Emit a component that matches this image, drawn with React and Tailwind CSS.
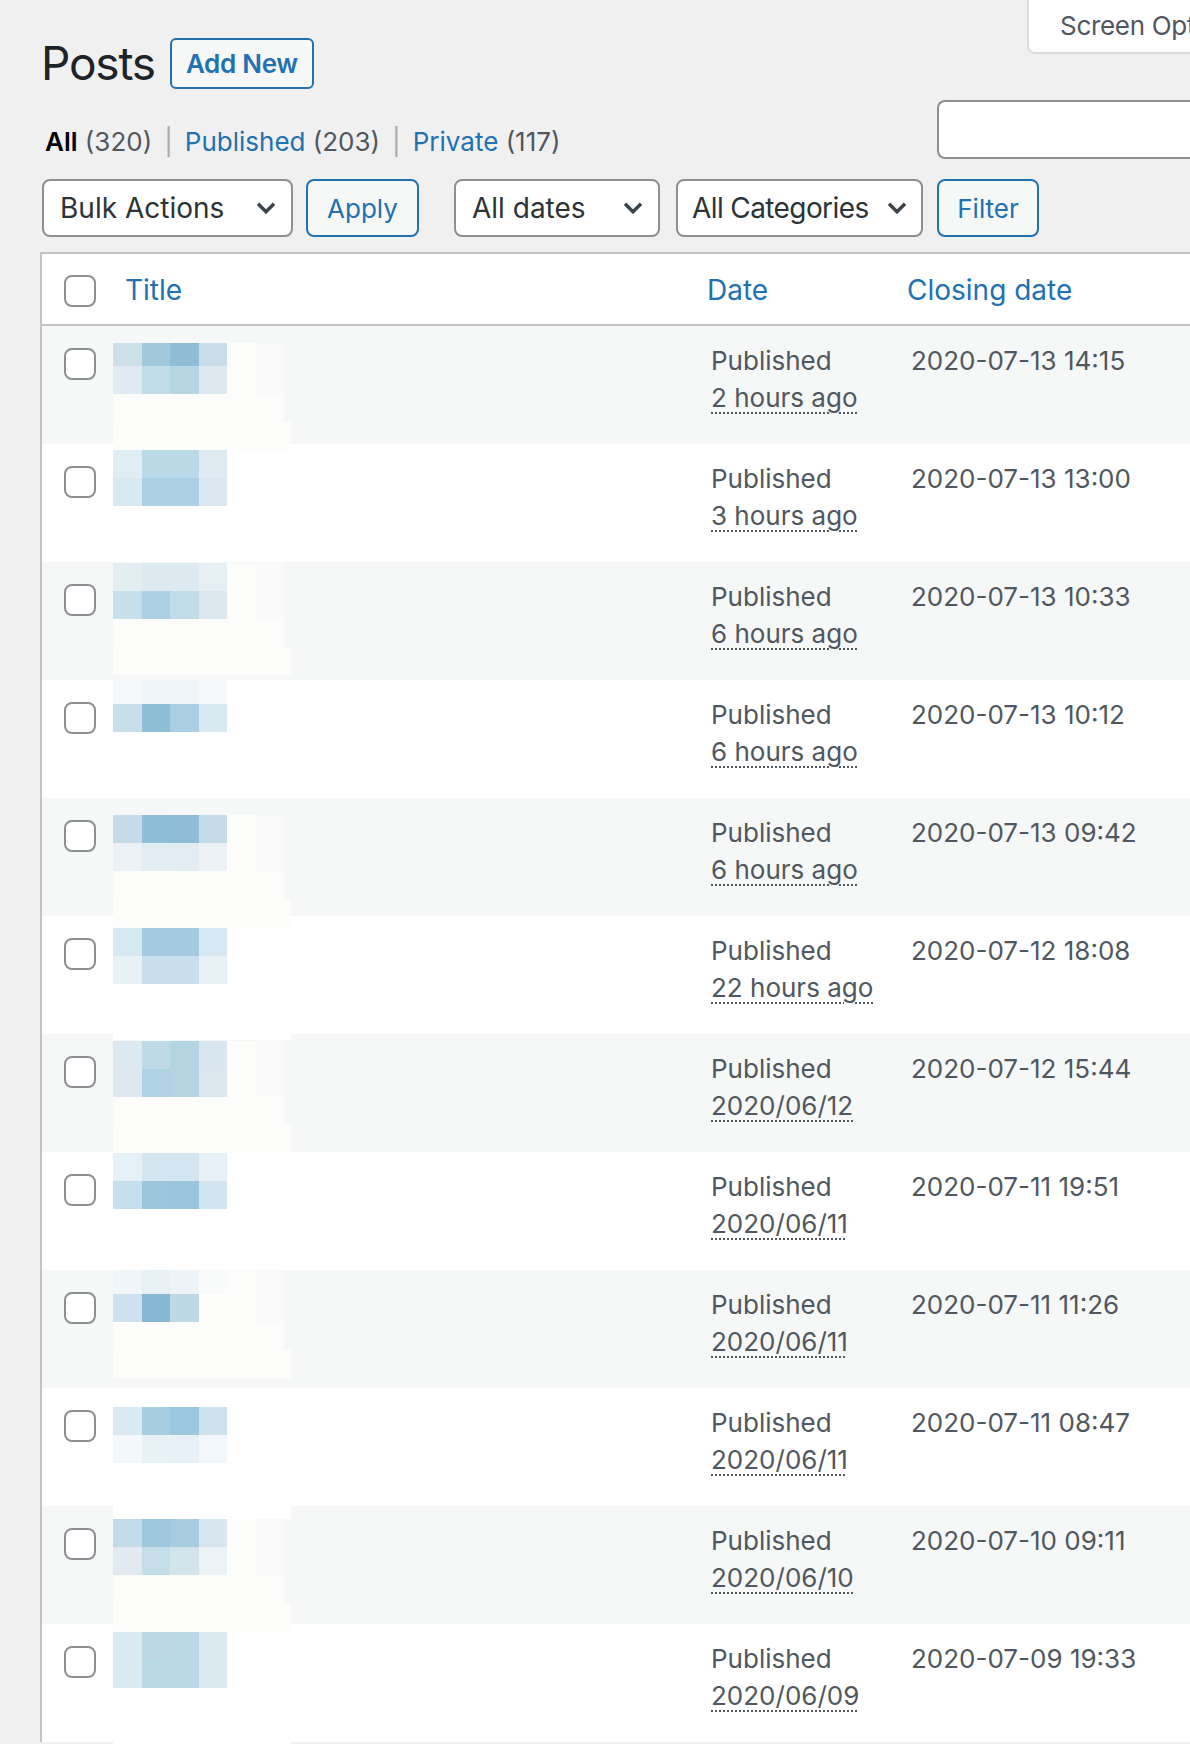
import React from 'react';

const FONT = { fontFamily: 'Inter, "Noto Sans", "Liberation Sans", sans-serif' };

const rows = [
  { ago: '2 hours ago', closing: '2020-07-13 14:15', top: 17, h1: 23, a: ['#cde0ea', '#a2c8dc', '#8fbdd5', '#c8dce8'], b: ['#e1eaf2', '#c1dbe7', '#b6d6e3', '#dde8f0'] },
  { ago: '3 hours ago', closing: '2020-07-13 13:00', top: 6, h1: 28, a: ['#dfedf5', '#badaea', '#badaea', '#dfebf3'], b: ['#d8e9f2', '#acd0e3', '#acd0e3', '#dbe8f1'] },
  { ago: '6 hours ago', closing: '2020-07-13 10:33', top: 1, h1: 28, a: ['#e3eef3', '#deeaf1', '#deeaf1', '#e6eff4'], b: ['#c8dfec', '#acd0e3', '#c1dbe8', '#dce8f0'] },
  { ago: '6 hours ago', closing: '2020-07-13 10:12', top: 0, h1: 24, a: ['#f6f9fb', '#eef4f7', '#eef4f7', '#f6f9fb'], b: ['#c6dfeb', '#8fbfd7', '#abcfe2', '#d9e9f1'] },
  { ago: '6 hours ago', closing: '2020-07-13 09:42', top: 17, h1: 28, a: ['#c5dce8', '#8fbfd8', '#8fbdd7', '#c4dbe8'], b: ['#ebf1f5', '#e2ecf3', '#e3ecf3', '#ebf1f4'] },
  { ago: '22 hours ago', closing: '2020-07-12 18:08', top: 12, h1: 28, a: ['#d6e8f1', '#a3cade', '#a3cade', '#d6e8f1'], b: ['#e7f1f6', '#c9e0ec', '#c9e0ec', '#e8f2f6'] },
  { ago: '2020/06/12', closing: '2020-07-12 15:44', top: 7, h1: 28, a: ['#dce9f0', '#c0d9e6', '#b2d4e3', '#d8e6ef'], b: ['#dfe8f0', '#b0d3e3', '#b4d4e3', '#dbe7ef'] },
  { ago: '2020/06/11', closing: '2020-07-11 19:51', top: 1, h1: 28, a: ['#e6f0f7', '#d3e6f1', '#d2e5f0', '#e7f1f7'], b: ['#c6dfec', '#9dc6dc', '#9ac5dc', '#d1e5ef'] },
  { ago: '2020/06/11', closing: '2020-07-11 11:26', top: 0, h1: 24, a: ['#eff5f8', '#e6f0f5', '#edf3f7', '#f9fafa'], b: ['#cde2ee', '#86b8d4', '#bed8e6', '#fdfdfc'] },
  { ago: '2020/06/11', closing: '2020-07-11 08:47', top: 19, h1: 28, a: ['#dbeaf2', '#a7cde1', '#9bc8de', '#cde2ed'], b: ['#f3f9fb', '#e7f1f6', '#e6f0f6', '#f1f7fb'] },
  { ago: '2020/06/10', closing: '2020-07-10 09:11', top: 13, h1: 28, a: ['#c2dbe8', '#9fc7dc', '#a7cbdf', '#d7e6ef'], b: ['#e1eaf1', '#c5dce9', '#d3e4ed', '#ecf3f6'] },
  { ago: '2020/06/09', closing: '2020-07-09 19:33', top: 8, h1: 28, a: ['#dbebf3', '#bed8e6', '#bad8e8', '#dceaf2'], b: ['#dbebf3', '#bcd9e7', '#bad8e8', '#dceaf2'] },
];

function Chevron() {
  return (
    <svg width="20" height="12" viewBox="0 0 20 12" className="shrink-0">
      <polyline points="2,1.8 10,9.8 18,1.8" fill="none" stroke="#3c434a" strokeWidth="3.4" />
    </svg>
  );
}

function Checkbox() {
  return <div className="w-[32px] h-[32px] rounded-[8px] border-2 border-[#8c8f94] bg-white shrink-0" />;
}

function Select({ label, width }) {
  return (
    <div
      className="h-[58px] flex items-center justify-between pl-[16px] pr-[15px] border-2 border-[#8c8f94] rounded-[8px] bg-white text-[28px] text-[#2c3338] whitespace-nowrap shrink-0"
      style={{ width }}
    >
      <span>{label}</span>
      <Chevron />
    </div>
  );
}

function Mosaic({ row, striped }) {
  const faint = striped ? '#fcfcfb' : '#ffffff';
  const side = striped ? '#fafafa' : '#ffffff';
  return (
    <div className="flex flex-col" style={{ paddingTop: row.top }}>
      <div className="flex" style={{ height: row.h1 }}>
        {row.a.map((c, i) => (
          <div key={i} className="w-[28.5px] h-full" style={{ background: c }} />
        ))}
        <div className="w-[28.5px] h-full" style={{ background: faint }} />
        <div className="w-[28.5px] h-full" style={{ background: side }} />
      </div>
      <div className="flex h-[28px]">
        {row.b.map((c, i) => (
          <div key={i} className="w-[28.5px] h-full" style={{ background: c }} />
        ))}
        <div className="w-[28.5px] h-full" style={{ background: faint }} />
        <div className="w-[28.5px] h-full" style={{ background: side }} />
      </div>
      <div className="h-[28px] w-[171px]" style={{ background: faint }} />
      <div className="h-[28px] w-[178px]" style={{ background: striped ? '#fdfdfc' : '#ffffff' }} />
    </div>
  );
}

export default function App() {
  return (
    <div className="min-h-screen w-[1190px] overflow-hidden bg-[#f0f0f1] pl-[40px] text-[#3c434a]" style={FONT}>
      {/* heading + screen options */}
      <div className="flex items-start w-[1150px]">
        <div className="flex-1 flex items-center pt-[38px]">
          <h1 className="text-[46px] leading-[51px] font-normal text-[#1d2327] ml-[1px] tracking-[-1.2px]">Posts</h1>
          <button className="ml-[15px] h-[51px] px-[14px] border-2 border-[#2271b1] rounded-[6px] bg-[#f6f7f7] text-[#2271b1] text-[26px] font-semibold leading-none tracking-[-0.3px]">
            Add New
          </button>
        </div>
        <div className="w-[163px] h-[54px] shrink-0 bg-white border-2 border-t-0 border-r-0 border-[#dcdcde] rounded-bl-[8px] overflow-hidden whitespace-nowrap pl-[31px] pt-[8px] text-[26px] leading-[36px] text-[#50575e] tracking-[-0.3px]">
          Screen Options
        </div>
      </div>

      {/* views + search */}
      <div className="flex items-start w-[1150px] mt-[11px]">
        <div className="flex-1 mt-[24px] ml-[5px] text-[26px] leading-[35px] text-[#50575e] whitespace-nowrap">
          <span className="font-semibold text-black">All</span> (320)
          <span className="text-[#a7aaad] mx-[12px]">|</span>
          <span className="text-[#2271b1]">Published</span> (203)
          <span className="text-[#a7aaad] mx-[12px]">|</span>
          <span className="text-[#2271b1]">Private</span> (117)
        </div>
        <div className="w-[253px] h-[59px] shrink-0 bg-white border-2 border-r-0 border-[#8c8f94] rounded-l-[8px]" />
      </div>

      {/* tablenav */}
      <div className="flex items-center mt-[20px] ml-[2px] text-[26px]">
        <Select label="Bulk Actions" width={251} />
        <button className="ml-[13px] w-[113px] h-[58px] border-2 border-[#2271b1] rounded-[8px] bg-[#f6f7f7] text-[#2271b1] text-[26px]">
          Apply
        </button>
        <div className="ml-[35px]">
          <Select label="All dates" width={206} />
        </div>
        <div className="ml-[16px]">
          <div className="h-[58px] w-[247px] flex items-center justify-between pl-[14px] pr-[14px] border-2 border-[#8c8f94] rounded-[8px] bg-white text-[28px] text-[#2c3338] whitespace-nowrap tracking-[-0.6px]">
            <span>All Categories</span>
            <Chevron />
          </div>
        </div>
        <button className="ml-[14px] w-[102px] h-[58px] border-2 border-[#2271b1] rounded-[8px] bg-[#f6f7f7] text-[#2271b1] text-[26px]">
          Filter
        </button>
      </div>

      {/* table */}
      <div className="mt-[15px] w-[1200px] bg-white border-l-2 border-t-2 border-[#c3c4c7]">
        <div className="flex h-[72px] border-b-2 border-[#c3c4c7] bg-white">
          <div className="w-[64px] pl-[22px] pt-[21px] shrink-0">
            <Checkbox />
          </div>
          <div className="w-[590px] pl-[19px] pt-[16px] text-[28px] leading-[40px] text-[#2271b1] shrink-0">Title</div>
          <div className="w-[200px] pl-[11px] pt-[16px] text-[28px] leading-[40px] text-[#2271b1] shrink-0">Date</div>
          <div className="w-[300px] pl-[11px] pt-[16px] text-[28px] leading-[40px] text-[#2271b1] shrink-0">Closing date</div>
        </div>
        {rows.map((row, i) => {
          const striped = i % 2 === 0;
          return (
            <div key={i} className={`flex h-[118px] ${striped ? 'bg-[#f6f7f7]' : 'bg-white'}`}>
              <div className="w-[64px] pl-[22px] pt-[22px] shrink-0">
                <Checkbox />
              </div>
              <div className="w-[590px] pl-[7px] shrink-0">
                <Mosaic row={row} striped={striped} />
              </div>
              <div className="w-[200px] pl-[15px] pt-[16px] text-[26px] leading-[37px] text-[#50575e] shrink-0">
                <div>Published</div>
                <div>
                  <span className="underline decoration-dotted decoration-[1.5px] underline-offset-[5px]">{row.ago}</span>
                </div>
              </div>
              <div className="w-[300px] pl-[15px] pt-[16px] text-[26px] leading-[37px] text-[#50575e] shrink-0">
                {row.closing}
              </div>
            </div>
          );
        })}
      </div>
    </div>
  );
}
